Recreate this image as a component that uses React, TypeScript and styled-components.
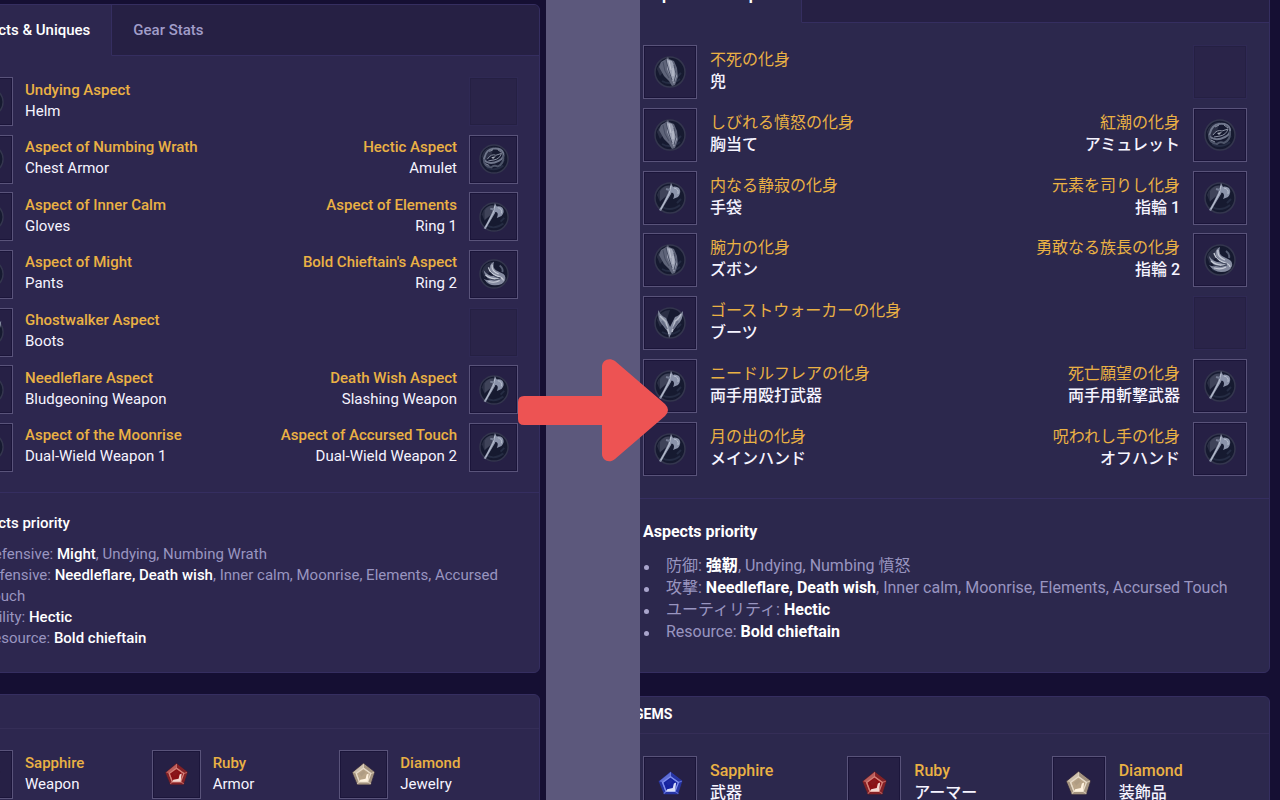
import React from "react";
import styled, { ThemeProvider, createGlobalStyle } from "styled-components";

const left = {
  panelBg: "#2d274f",
  font: 15,
  line: 21,
  box: 49,
  orb: 30,
  gem: 25,
  gap: 12,
  inset: 21,
  tabs: 50,
  tabPad: 21,
  tabColor: "#a19dc9",
  rowsHeight: 395,
  rowsBottom: 20,
  listTop: 10,
  headTop: 20,
  bottom: 23,
  between: 21,
  gemHead: 33,
  gemFont: 13,
  marker: 20,
  titleWeight: 500,
  placeWeight: 400,
  strongWeight: 500,
  outer: "4px 6px 0 -58px",
};

const right: typeof left = {
  panelBg: "#2c284d",
  font: 16,
  line: 22,
  box: 54,
  orb: 32,
  gem: 27,
  gap: 13,
  inset: 22,
  tabs: 54,
  tabPad: 22,
  tabColor: "#a19dc9",
  rowsHeight: 431,
  rowsBottom: 22,
  listTop: 12,
  headTop: 22,
  bottom: 29,
  between: 23,
  gemHead: 36,
  gemFont: 14,
  marker: 23,
  titleWeight: 400,
  placeWeight: 500,
  strongWeight: 700,
  outer: "-33px 10px 0 -20px",
};

type BuildTheme = typeof left;

declare module "styled-components" {
  export interface DefaultTheme extends BuildTheme {}
}

const GlobalStyle = createGlobalStyle`
  * { box-sizing: border-box; }
  body {
    margin: 0;
    background: #5c587c;
    font-family: Roboto, "Noto Sans CJK JP", sans-serif;
  }
  button { font: inherit; }
  ul { list-style: none; margin: 0; padding: 0; }
`;

const Page = styled.main`
  position: relative;
  display: grid;
  grid-template-columns: 546fr 94fr 640fr;
  height: 100vh;
  overflow: hidden;
`;

const Side = styled.div`
  min-width: 0;
  overflow: hidden;
  background: #150f33;
  font-size: ${(p) => p.theme.font}px;
  line-height: ${(p) => p.theme.line}px;
`;

const Stack = styled.div`
  display: flex;
  flex-direction: column;
  gap: ${(p) => p.theme.between}px;
  margin: ${(p) => p.theme.outer};
`;

const Panel = styled.section`
  border: 1px solid #352e60;
  border-radius: 6px;
  background: ${(p) => p.theme.panelBg};
  overflow: hidden;
`;

const Tabs = styled.div`
  display: flex;
  height: ${(p) => p.theme.tabs + 1}px;
`;

const Tab = styled.button<{ $active?: boolean }>`
  padding: 0 ${(p) => p.theme.tabPad}px;
  border: 0;
  border-bottom: 1px solid ${(p) => (p.$active ? "transparent" : "#352e60")};
  border-right: ${(p) => (p.$active ? "1px solid #352e60" : "0")};
  background: ${(p) => (p.$active ? "transparent" : "#262044")};
  color: ${(p) => (p.$active ? "#ffffff" : p.theme.tabColor)};
  font-weight: ${(p) => p.theme.strongWeight};
  white-space: nowrap;
`;

const TabFill = styled.div`
  flex: 1;
  border-bottom: 1px solid #352e60;
  background: #262044;
`;

const Rows = styled.ul`
  display: grid;
  grid-template-columns: 1fr 1fr;
  align-content: space-between;
  min-height: ${(p) => p.theme.rowsHeight}px;
  margin: ${(p) => p.theme.inset}px ${(p) => p.theme.inset}px ${(p) => p.theme.rowsBottom}px;
`;

const Item = styled.li<{ $end?: boolean }>`
  display: flex;
  flex-direction: ${(p) => (p.$end ? "row-reverse" : "row")};
  align-items: center;
  gap: ${(p) => p.theme.gap}px;
  text-align: ${(p) => (p.$end ? "right" : "left")};
  white-space: nowrap;
`;

const Slot = styled.div<{ $empty?: boolean }>`
  display: flex;
  flex: none;
  align-items: center;
  justify-content: center;
  width: ${(p) => p.theme.box}px;
  height: ${(p) => p.theme.box}px;
  border: 1px solid ${(p) => (p.$empty ? "#2f2954" : "#59537a")};
  background: ${(p) => (p.$empty ? "#2a2449" : "#262045")};
  box-shadow: inset 0 0 0 1px ${(p) => (p.$empty ? "#252043" : "#1b153a")};
`;

const Labels = styled.div`
  padding-bottom: 2px;
`;

const Title = styled.div<{ $strong?: boolean }>`
  color: #eab144;
  font-weight: ${(p) => (p.$strong ? 500 : p.theme.titleWeight)};
`;

const Place = styled.div`
  color: #f6f4ff;
  font-weight: ${(p) => p.theme.placeWeight};
`;

const Priority = styled.div`
  padding: ${(p) => p.theme.headTop}px ${(p) => p.theme.inset}px ${(p) => p.theme.bottom}px;
  border-top: 1px solid #352e60;
`;

const Heading = styled.h3`
  margin: 0 0 ${(p) => p.theme.listTop}px;
  color: #ffffff;
  font-size: inherit;
  font-weight: ${(p) => p.theme.strongWeight};
`;

const Line = styled.li`
  display: grid;
  grid-template-columns: ${(p) => p.theme.marker}px 1fr;
  color: #9995c0;

  &::before {
    content: "";
    width: 5px;
    height: 5px;
    margin: 10px 0 0 1px;
    border-radius: 50%;
    background: #a9a5cc;
  }

  strong {
    color: #ffffff;
    font-weight: ${(p) => p.theme.strongWeight};
  }
`;

const GemHeading = styled.h2`
  height: ${(p) => p.theme.gemHead + 1}px;
  margin: 0;
  padding: 0 13px;
  border-bottom: 1px solid #352e57;
  color: #ffffff;
  font-size: ${(p) => p.theme.gemFont}px;
  font-weight: 700;
  line-height: ${(p) => p.theme.gemHead - 1}px;
`;

const GemRow = styled.ul`
  display: grid;
  grid-template-columns: repeat(3, 1fr);
  gap: 9px;
  padding: ${(p) => p.theme.inset}px;
`;

const Arrow = styled.svg`
  position: absolute;
  left: calc(50% - 122px);
  top: 359px;
`;

type Glyph = "plate" | "ring" | "axe" | "swirl" | "horns";

const glyphs: Record<Glyph, React.ReactNode> = {
  plate: (
    <>
      <path d="M7 6 12 3l2-2 1 2 5 2 3 7 1 9-3 8-3 1-3-5-5-5-5-9z" fill="#5f6479" />
      <path d="M13 3l5 2 3 7 2 8-3 8-3-6-4-9z" fill="#9ea3b5" />
      <path d="M9 6l2 9 4 7M12 4l3 11 3 9M20 9l2 9-2 8" fill="none" stroke="#474d63" />
      <path d="M15 5l2 9M19 12l0 8" fill="none" stroke="#c1c5d2" />
    </>
  ),
  ring: (
    <>
      <path d="M6 14q2-8 9-9 9-1 11 5 1 5-5 8-8 4-13 1-4-2-2-5z" fill="none" stroke="#70778c" strokeWidth="2" />
      <path d="M5 16q0 8 8 9 3-3 7-1 7-3 6-12" fill="none" stroke="#4e556a" strokeWidth="2" />
      <path d="M9 16q4-6 9-4l6-2q-2 6-8 7l-6 1M11 8l4-2M20 6l4 3M7 21l4 2" fill="none" stroke="#8d93a5" />
      <path d="M13 14l5-1-3 3z" fill="#a8adba" />
    </>
  ),
  axe: (
    <>
      <path d="M6 9q4-6 10-5l-2 9-8 6z" fill="#4d5268" opacity=".6" />
      <path d="M17 1 19 5 17 12 11 22 7 29 5 28 9 21 14 11z" fill="#8e95aa" />
      <path d="M16 6q5-3 9 0 3 4-1 9l-5 2q2-4 0-6l-4-1z" fill="#8b93aa" />
      <path d="M20 6q5 1 4 6M17 4l-2 8-8 15" fill="none" stroke="#b9c0d0" />
      <path d="M12 7l4 1" stroke="#757c93" strokeWidth="2" />
    </>
  ),
  swirl: (
    <>
      <path d="M16 3q-6 3-4 9l5 6q-7 1-12-6 1 7 7 10-4 1-7-1 5 7 12 7 9 0 11-6 1-5-4-7l-6-3q-4-3-2-9z" fill="#858ba0" />
      <path d="M10 9q2 7 9 9t7 5M7 17q6 5 14 4M10 24q7 2 12-1M14 6q-1 7 7 10" fill="none" stroke="#c8cdd8" strokeWidth="1.3" />
      <path d="M12 14q4 6 11 6M9 21q8 3 14 0" fill="none" stroke="#353c52" />
      <path d="M22 7q4 3 3 7" fill="none" stroke="#555c72" strokeWidth="2" />
    </>
  ),
  horns: (
    <>
      <path d="M4 3q0 10 3 13l7 9 1 6 3-6 6-8q5-4 5-13-4 5-8 6l-5 10-4-9Q7 9 4 3z" fill="#838a9f" />
      <path d="M6 9l6 6 3 12M27 7q-2 5-6 7l-3 11" fill="none" stroke="#b7bcca" strokeWidth="1.5" />
      <path d="M8 14l5 8M24 14l-5 8" fill="none" stroke="#696f86" strokeWidth="2" />
    </>
  ),
};

function Orb({ glyph, size }: { glyph: Glyph; size: number }) {
  return (
    <svg width={size} height={size} viewBox="0 0 32 32" aria-hidden="true">
      <circle cx="16" cy="16" r="15" fill="#161a30" stroke="#34364e" strokeWidth="1.5" />
      <path d="M3 13a13 13 0 0 1 13-10l-3 9-7 8z" fill="#35394f" opacity=".7" />
      <path d="M8 25q9 5 18-2M23 21l4-4" fill="none" stroke="#252c43" strokeWidth="2" />
      {glyphs[glyph]}
    </svg>
  );
}

type GemName = "sapphire" | "ruby" | "diamond";

const gemColors: Record<GemName, [string, string, string, string]> = {
  sapphire: ["#2634a4", "#7f8fef", "#1623a0", "#d9def8"],
  ruby: ["#842126", "#d58078", "#8b1015", "#f4d6d0"],
  diamond: ["#a4937f", "#e7dac7", "#b9a488", "#fff2df"],
};

function Gem({ kind, size }: { kind: GemName; size: number }) {
  const [edge, light, core, shine] = gemColors[kind];
  return (
    <svg width={size} height={size} viewBox="0 0 24 24" aria-hidden="true">
      <path d="M12 1 23 9.5 19 22 6 22 1 10z" fill={edge} stroke="#29203c" strokeWidth=".7" />
      <path d="M12 2 12 6 5 11 2 10z" fill={light} opacity=".65" />
      <path d="M12 6 19 11 16 19 8 19 5 11z" fill={core} stroke={light} strokeWidth="1.2" />
      <path d="M12 2 12 6 19 11 22 10M5 11 8 19 6 21M16 19l3 2" fill="none" stroke={light} opacity=".7" />
      <path d="M8 19l1-2 5-1 1-4 2-1-1 8z" fill={shine} />
      <path d="M8 11l4-3 2 2-4 4z" fill={edge} opacity=".45" />
    </svg>
  );
}

type Entry = { title: string; place: string; glyph: Glyph } | null;
type Note = { label: string; strong: string; rest?: string };
type GemEntry = { name: string; place: string; kind: GemName };

interface BuildProps {
  theme: BuildTheme;
  lang: string;
  entries: [Entry, Entry][];
  notes: Note[];
  gems: GemEntry[];
}

function AspectItem({ entry, end, size }: { entry: Entry; end?: boolean; size: number }) {
  return (
    <Item $end={end}>
      <Slot $empty={!entry}>{entry && <Orb glyph={entry.glyph} size={size} />}</Slot>
      {entry && (
        <Labels>
          <Title>{entry.title}</Title>
          <Place>{entry.place}</Place>
        </Labels>
      )}
    </Item>
  );
}

function Build({ theme, lang, entries, notes, gems }: BuildProps) {
  return (
    <ThemeProvider theme={theme}>
      <Side lang={lang}>
        <Stack>
          <Panel>
            <Tabs>
              <Tab type="button" $active>Aspects &amp; Uniques</Tab>
              <Tab type="button">Gear Stats</Tab>
              <TabFill />
            </Tabs>
            <Rows>
              {entries.map(([a, b], i) => (
                <React.Fragment key={i}>
                  <AspectItem entry={a} size={theme.orb} />
                  <AspectItem entry={b} end size={theme.orb} />
                </React.Fragment>
              ))}
            </Rows>
            <Priority>
              <Heading>Aspects priority</Heading>
              <ul>
                {notes.map((n) => (
                  <Line key={n.label}>
                    <span>
                      {n.label}: <strong>{n.strong}</strong>
                      {n.rest}
                    </span>
                  </Line>
                ))}
              </ul>
            </Priority>
          </Panel>
          <Panel>
            <GemHeading>GEMS</GemHeading>
            <GemRow>
              {gems.map((g) => (
                <Item key={g.kind}>
                  <Slot>
                    <Gem kind={g.kind} size={theme.gem} />
                  </Slot>
                  <Labels>
                    <Title $strong>{g.name}</Title>
                    <Place>{g.place}</Place>
                  </Labels>
                </Item>
              ))}
            </GemRow>
          </Panel>
        </Stack>
      </Side>
    </ThemeProvider>
  );
}

const e = (title: string, place: string, glyph: Glyph): Entry => ({ title, place, glyph });

const english: [Entry, Entry][] = [
  [e("Undying Aspect", "Helm", "plate"), null],
  [e("Aspect of Numbing Wrath", "Chest Armor", "plate"), e("Hectic Aspect", "Amulet", "ring")],
  [e("Aspect of Inner Calm", "Gloves", "axe"), e("Aspect of Elements", "Ring 1", "axe")],
  [e("Aspect of Might", "Pants", "plate"), e("Bold Chieftain's Aspect", "Ring 2", "swirl")],
  [e("Ghostwalker Aspect", "Boots", "horns"), null],
  [e("Needleflare Aspect", "Bludgeoning Weapon", "axe"), e("Death Wish Aspect", "Slashing Weapon", "axe")],
  [e("Aspect of the Moonrise", "Dual-Wield Weapon 1", "axe"), e("Aspect of Accursed Touch", "Dual-Wield Weapon 2", "axe")],
];

const japanese: [Entry, Entry][] = [
  [e("不死の化身", "兜", "plate"), null],
  [e("しびれる憤怒の化身", "胸当て", "plate"), e("紅潮の化身", "アミュレット", "ring")],
  [e("内なる静寂の化身", "手袋", "axe"), e("元素を司りし化身", "指輪 1", "axe")],
  [e("腕力の化身", "ズボン", "plate"), e("勇敢なる族長の化身", "指輪 2", "swirl")],
  [e("ゴーストウォーカーの化身", "ブーツ", "horns"), null],
  [e("ニードルフレアの化身", "両手用殴打武器", "axe"), e("死亡願望の化身", "両手用斬撃武器", "axe")],
  [e("月の出の化身", "メインハンド", "axe"), e("呪われし手の化身", "オフハンド", "axe")],
];

const offensive = ", Inner calm, Moonrise, Elements, Accursed Touch";

export default function App() {
  return (
    <Page>
      <GlobalStyle />
      <Build
        theme={left}
        lang="en"
        entries={english}
        notes={[
          { label: "Defensive", strong: "Might", rest: ", Undying, Numbing Wrath" },
          { label: "Offensive", strong: "Needleflare, Death wish", rest: offensive },
          { label: "Utility", strong: "Hectic" },
          { label: "Resource", strong: "Bold chieftain" },
        ]}
        gems={[
          { name: "Sapphire", place: "Weapon", kind: "sapphire" },
          { name: "Ruby", place: "Armor", kind: "ruby" },
          { name: "Diamond", place: "Jewelry", kind: "diamond" },
        ]}
      />
      <div />
      <Build
        theme={right}
        lang="ja"
        entries={japanese}
        notes={[
          { label: "防御", strong: "強靭", rest: ", Undying, Numbing 憤怒" },
          { label: "攻撃", strong: "Needleflare, Death wish", rest: offensive },
          { label: "ユーティリティ", strong: "Hectic" },
          { label: "Resource", strong: "Bold chieftain" },
        ]}
        gems={[
          { name: "Sapphire", place: "武器", kind: "sapphire" },
          { name: "Ruby", place: "アーマー", kind: "ruby" },
          { name: "Diamond", place: "装飾品", kind: "diamond" },
        ]}
      />
      <Arrow width="151" height="103" viewBox="0 0 151 103" aria-hidden="true">
        <path
          d="M6 37H84V8C84 1 91-2 97 2L147 45Q153 51 147 57L97 100C91 105 84 101 84 95V66H6Q0 66 0 60V43Q0 37 6 37Z"
          fill="#ed5353"
        />
      </Arrow>
    </Page>
  );
}
